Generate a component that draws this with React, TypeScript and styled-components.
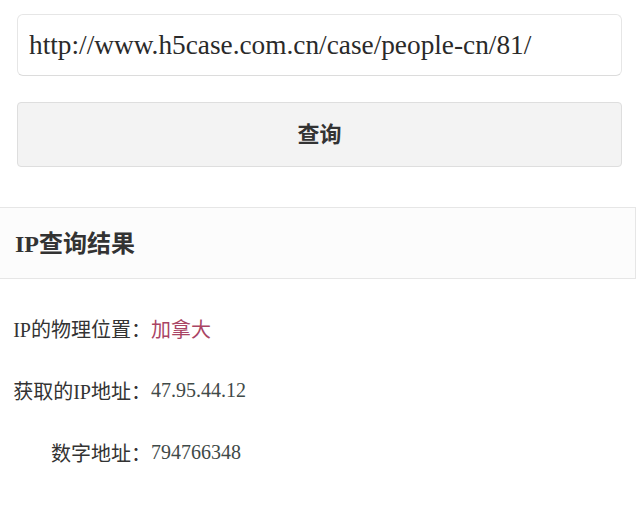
import styled, { createGlobalStyle } from "styled-components";

const GlobalStyle = createGlobalStyle`
  body {
    margin: 0;
    background: #ffffff;
    font-family: "Liberation Serif", "Noto Sans CJK SC", serif;
    color: #333333;
  }
`;

const rows = [
  { label: "IP的物理位置：", value: "加拿大", tone: "place" },
  { label: "获取的IP地址：", value: "47.95.44.12", tone: "plain" },
  { label: "数字地址：", value: "794766348", tone: "plain" },
];

const App = () => {
  return (
    <Page>
      <GlobalStyle />
      <SearchForm>
        <UrlInput defaultValue="http://www.h5case.com.cn/case/people-cn/81/" />
        <QueryButton type="button">查询</QueryButton>
      </SearchForm>
      <ResultPanel>
        <PanelTitle>IP查询结果</PanelTitle>
      </ResultPanel>
      <ResultList>
        {rows.map((row) => (
          <ResultRow key={row.label}>
            <RowLabel>{row.label}</RowLabel>
            <RowValue $tone={row.tone}>{row.value}</RowValue>
          </ResultRow>
        ))}
      </ResultList>
    </Page>
  );
};

const Page = styled.div`
  width: 640px;
  height: 524px;
  overflow: hidden;
  padding-top: 14px;
  box-sizing: border-box;
`;

const SearchForm = styled.div`
  display: flex;
  flex-direction: column;
  gap: 26px;
  padding: 0 18px 0 17px;
`;

const UrlInput = styled.input`
  height: 62px;
  box-sizing: border-box;
  border: 1px solid #e6e6e6;
  border-bottom-color: #dcdcdc;
  border-radius: 6px;
  background: #ffffff;
  padding: 0 11px;
  font-family: "Liberation Serif", serif;
  font-size: 27.3px;
  color: #2a2a2a;
  outline: none;
`;

const QueryButton = styled.button`
  height: 65px;
  padding: 0 0 6px;
  border: 1px solid #dedede;
  border-radius: 4px;
  background: #f3f3f3;
  font-family: "Noto Sans CJK SC", sans-serif;
  font-size: 22px;
  font-weight: 700;
  color: #333333;
`;

const ResultPanel = styled.div`
  margin-top: 40px;
  margin-right: 4px;
  height: 72px;
  box-sizing: border-box;
  border: 1px solid #e6e6e6;
  border-left: none;
  background: #fcfcfc;
  display: flex;
  align-items: center;
  padding-left: 15px;
`;

const PanelTitle = styled.h3`
  margin: 0 0 3px;
  font-family: "Liberation Serif", "Noto Sans CJK SC", serif;
  font-size: 24px;
  font-weight: 700;
  color: #333333;
`;

const ResultList = styled.div`
  display: flex;
  flex-direction: column;
  gap: 36px;
  padding-top: 36px;
`;

const ResultRow = styled.div`
  display: flex;
  align-items: center;
  height: 26px;
  font-size: 20px;
`;

const RowLabel = styled.span`
  width: 151px;
  text-align: right;
  color: #333333;
`;

const RowValue = styled.span<{ $tone: string }>`
  color: ${(p) => (p.$tone === "place" ? "#a94464" : "#3f4a48")};
`;

export default App;
